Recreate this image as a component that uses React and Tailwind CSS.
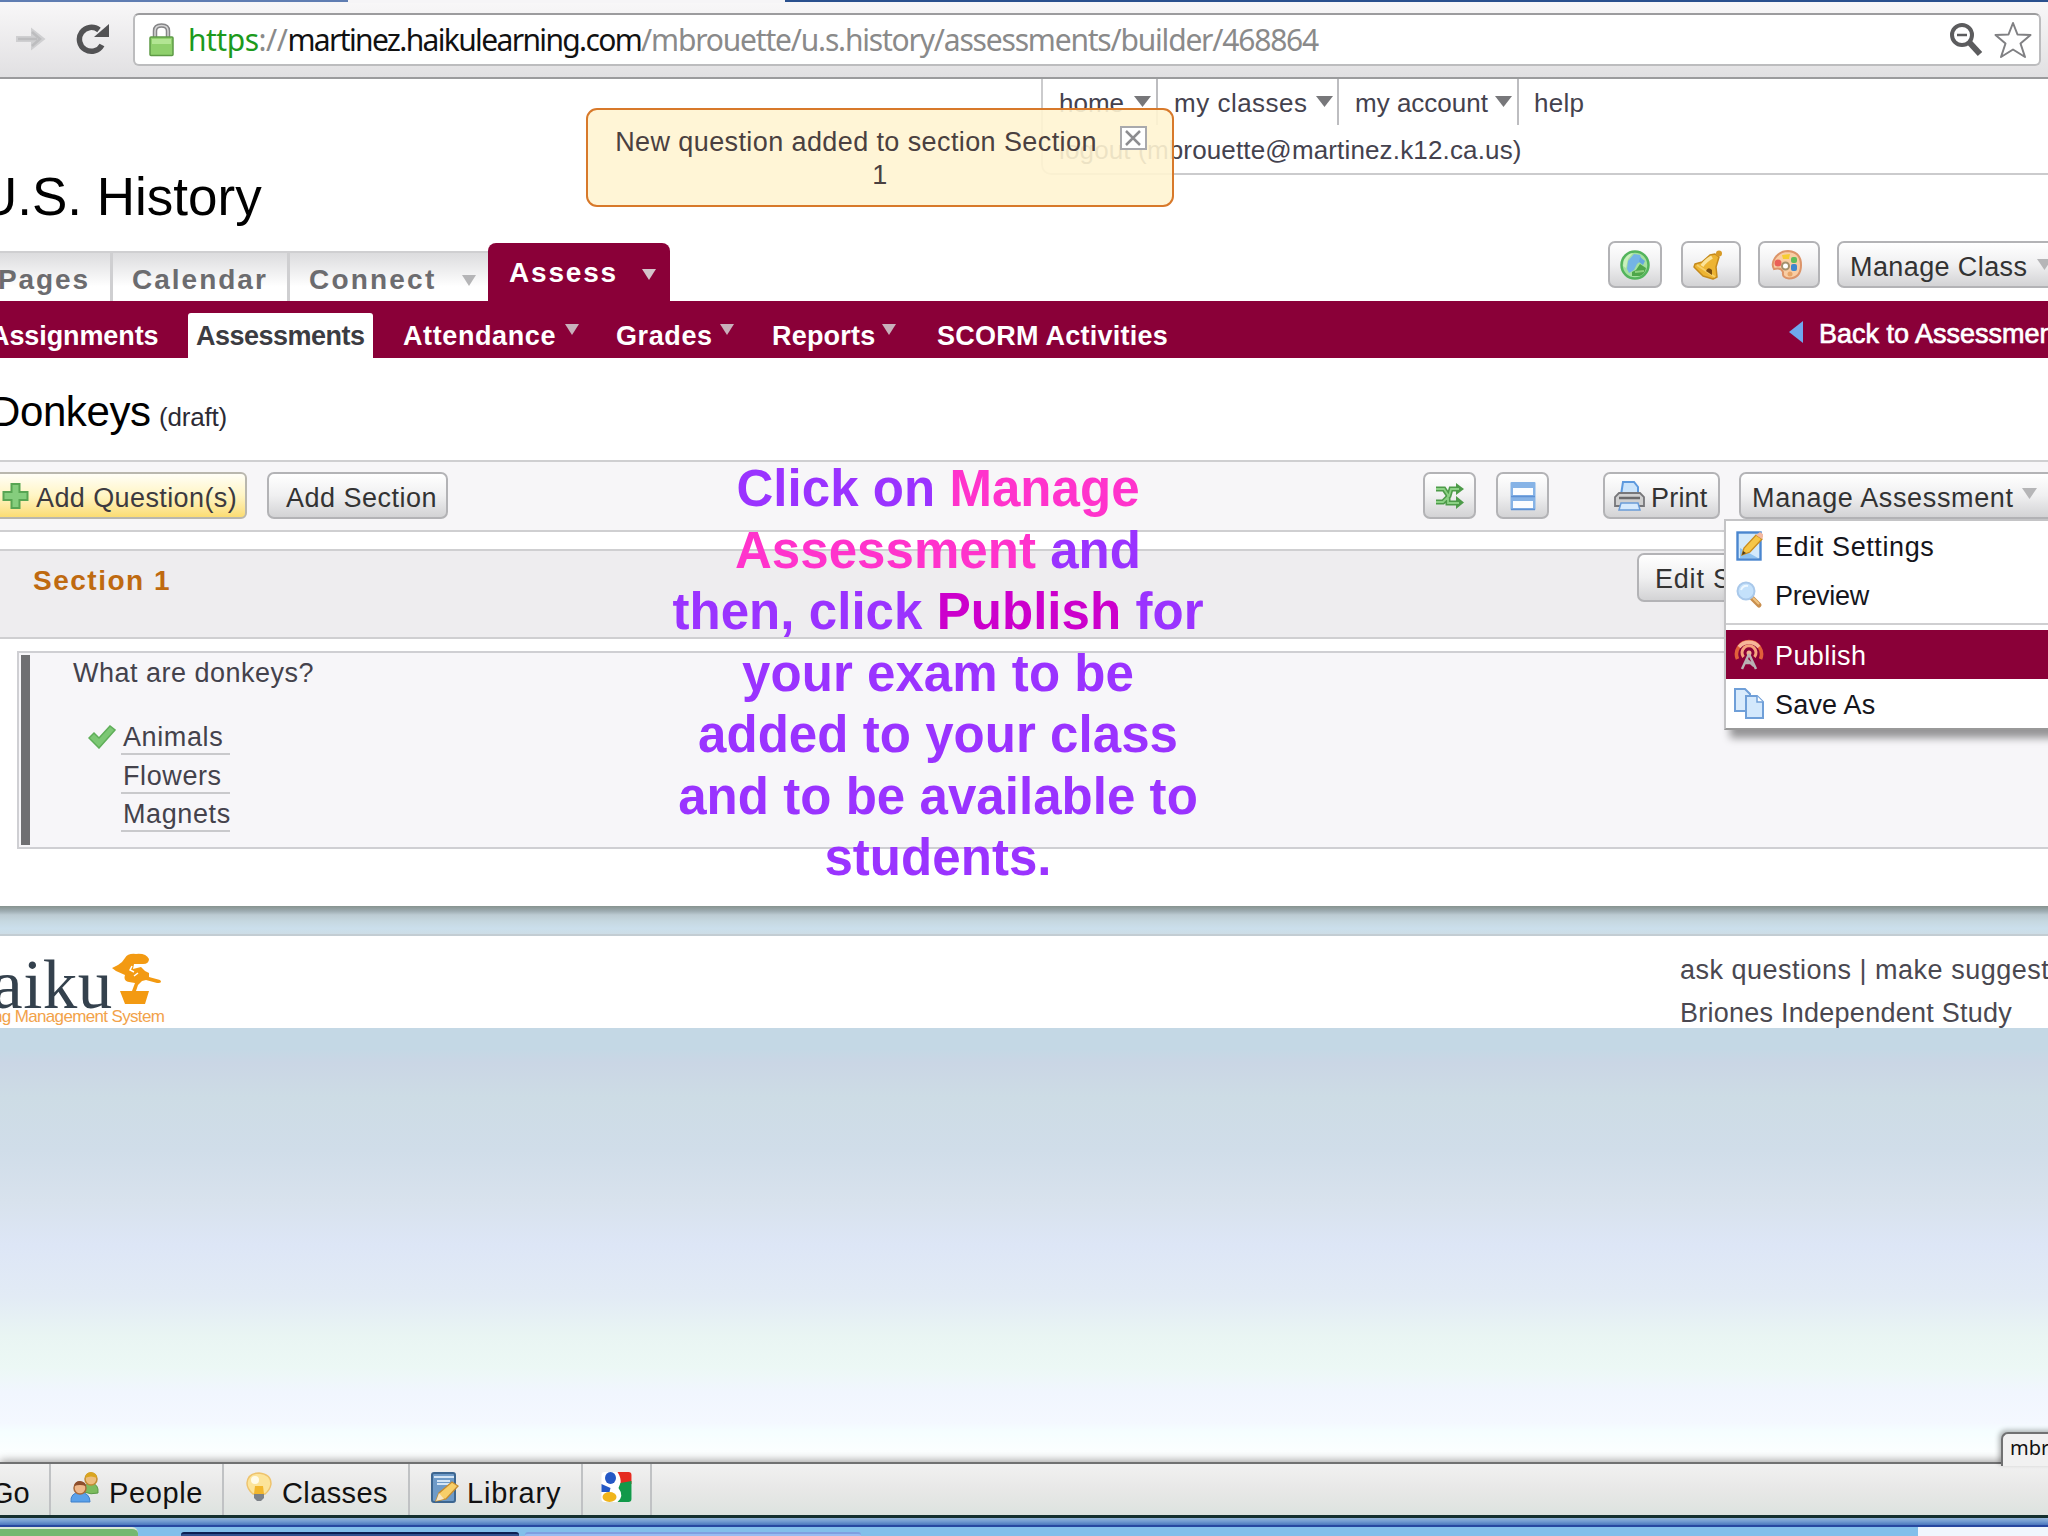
import { useState } from 'react';

const menuItems = [
  { label: 'Edit Settings', icon: 'edit', tracking: 'tracking-[0.6px]' },
  { label: 'Preview', icon: 'preview', tracking: 'tracking-[-0.3px]' },
  { divider: true },
  { label: 'Publish', icon: 'publish', tracking: 'tracking-[0.4px]' },
  { label: 'Save As', icon: 'copy', tracking: 'tracking-[0.2px]' },
];

const answers = [
  { text: 'Animals', correct: true },
  { text: 'Flowers', correct: false },
  { text: 'Magnets', correct: false },
];

function Caret({ className, color = '#8a8a8a' }) {
  return (
    <svg viewBox="0 0 16 10" preserveAspectRatio="none" className={`shrink-0 ${className}`}>
      <path d="M0 0H16L8 10Z" fill={color} />
    </svg>
  );
}

function MenuIcon({ name }) {
  if (name === 'edit') {
    return (
      <svg viewBox="0 0 27 30" className="w-[27px] h-[30px]">
        <rect x="1.5" y="1.5" width="23" height="27" fill="#d3e9fb" stroke="#4a86cf" strokeWidth="2.4" />
        <path d="M4 17L22 27H4Z" fill="#8fc2f0" />
        <path d="M6 24L8 17L20 4L26 8L14 21Z" fill="#f6c648" stroke="#c98b1c" strokeWidth="1.3" />
        <path d="M20 4L26 8L28 4L24 1Z" fill="#f3b9a2" />
        <path d="M6 24L7 20L10 22Z" fill="#4b3a1c" />
      </svg>
    );
  }
  if (name === 'preview') {
    return (
      <svg viewBox="0 0 27 28" className="w-[27px] h-[28px]">
        <path d="M16 17L23 24" stroke="#c98f4e" strokeWidth="5" strokeLinecap="round" />
        <path d="M17 17L23 23" stroke="#eec27f" strokeWidth="2" />
        <circle cx="10" cy="10" r="8.5" fill="#c4e1fb" stroke="#a9c8ea" strokeWidth="2" />
        <path d="M5 9Q7 4 12 5" stroke="#eef8ff" strokeWidth="2" fill="none" />
      </svg>
    );
  }
  if (name === 'publish') {
    return (
      <svg viewBox="0 0 30 31" className="ml-[-2px] w-[30px] h-[31px]" fill="none">
        <path d="M3.500 20A12.500 12.500 0 1 1 26.500 20" stroke="#e2603a" strokeWidth="3.600" />
        <path d="M5 8A12.500 11.500 0 0 1 25 8" stroke="#f6b79a" strokeWidth="3.600" />
        <path d="M9.500 18A7 7 0 1 1 20.500 18" stroke="#f5a37c" strokeWidth="3" />
        <circle cx="15" cy="14" r="2.500" fill="#f0b090" />
        <path d="M15 15L8 30M15 15L22 30M11 24L19 24M12 20L20 27" stroke="#b9b2b4" strokeWidth="2.500" />
      </svg>
    );
  }
  return (
    <svg viewBox="0 0 30 31" className="ml-[-2px] w-[30px] h-[31px]">
      <path d="M1 1H11L16 6V23H1Z" fill="#d9ebfc" stroke="#6f9fd8" strokeWidth="2" />
      <path d="M12 8H23L29 14V30H12Z" fill="#d3e8fc" stroke="#6f9fd8" strokeWidth="2" />
      <path d="M23 8V14H29" fill="#fff" stroke="#6f9fd8" strokeWidth="1.500" />
    </svg>
  );
}

function GreyButton({ className, children }) {
  return (
    <button className={`flex shrink-0 items-center rounded-[7px] border-2 border-[#b3b3b6] bg-gradient-to-b from-white via-[#f0f0f1] to-[#d3d3d5] whitespace-nowrap text-[27px] leading-none text-[#333] ${className}`}>
      {children}
    </button>
  );
}

function BrowserBar() {
  return (
    <div className="h-[79px]">
      <div className="flex h-[3px] justify-between bg-[#f6f5f7]">
        <div className="h-[2px] w-[348px] bg-[#5f7db2]" />
        <div className="h-[2px] w-[1263px] bg-[#2a508e]" />
      </div>
      <div className="flex h-[76px] border-b-2 border-[#9b9b9d] bg-gradient-to-b from-[#f8f7f8] to-[#e1e0e2] pt-[10px]">
        <svg viewBox="0 0 32 28" className="mt-[12px] ml-[15px] h-[28px] w-[32px]">
          <path d="M1 11H16V2.500L30.500 14L16 25.500V17H1Z" fill="#cfcfd1" />
          <path d="M3 14H22M17 7L25 14L17 21" stroke="#bdbdbf" strokeWidth="2.500" fill="none" />
        </svg>
        <svg viewBox="0 0 34 32" className="mt-[10px] ml-[29px] h-[32px] w-[34px]">
          <path d="M26 22A12 12 0 1 1 23 7" stroke="#525254" strokeWidth="5.500" fill="none" />
          <path d="M33 1V14H18Z" fill="#525254" />
        </svg>
        <div className="ml-[23px] flex h-[53px] w-[1908px] items-center rounded-[6px] border-2 border-t-[#9c9c9e] border-[#bcbcbe] bg-white pl-[14px]">
          <svg viewBox="0 0 25 34" className="h-[34px] w-[25px] shrink-0">
            <path d="M6 16V8Q6 2.500 12.500 2.500T19 8V16" stroke="#858587" strokeWidth="4.500" fill="none" />
            <path d="M6 16V8Q6 2.500 12.500 2.500T19 8V16" stroke="#d5d5d5" strokeWidth="1.500" fill="none" />
            <rect x="1" y="14" width="23" height="18.500" rx="1" fill="#8fd06c" stroke="#5d9a45" strokeWidth="1.500" />
            <rect x="3" y="16" width="19" height="5" fill="#b2e593" />
          </svg>
          <span className="ml-[14px] w-[1761px] shrink-0 font-['Noto_Sans'] text-[30px] leading-none tracking-[-1.2px] whitespace-nowrap text-[#8a8a8a]">
            <span className="tracking-[-0.5px]">
              <span className="text-[#1c9a1c]">https</span>://
            </span>
            <span className="tracking-[-1.65px] text-[#111]">martinez.haikulearning.com</span>/mbrouette/u.s.history/assessments/builder/468864
          </span>
          <svg viewBox="0 0 34 34" className="h-[34px] w-[34px] shrink-0" fill="none">
            <circle cx="13" cy="12" r="10" stroke="#5c5c5e" strokeWidth="4" />
            <path d="M8 12H18" stroke="#5c5c5e" strokeWidth="2.500" />
            <path d="M20 19L31 31" stroke="#5c5c5e" strokeWidth="6" />
          </svg>
          <svg viewBox="0 0 38 38" className="ml-[11px] h-[38px] w-[38px] shrink-0">
            <path d="M19 2L23.500 13.500L36.500 14L26.500 22.500L31 36L19 28.500L7 36L11.500 22.500L1.500 14L14.500 13.500Z" fill="#fff" stroke="#808083" strokeWidth="2" strokeLinejoin="round" />
          </svg>
        </div>
      </div>
    </div>
  );
}

function UserNav() {
  return (
    <div className="ml-[1041px] h-[96px] w-[1020px] rounded-bl-[10px] border-b-2 border-l-2 border-[#cbcbcd] text-[26px] leading-none whitespace-nowrap text-[#44424e]">
      <div className="flex h-[46px]">
        <div className="flex w-[115px] border-r-2 border-[#bdbdc0] pt-[11px] pl-[16px]">
          home<Caret className="mt-[6px] ml-[10px] h-[11px] w-[17px]" color="#77777a" />
        </div>
        <div className="flex w-[181px] border-r-2 border-[#bdbdc0] pt-[11px] pl-[16px]">
          <span className="w-[142px] tracking-[0.5px]">my classes</span>
          <Caret className="mt-[6px] h-[11px] w-[17px]" color="#77777a" />
        </div>
        <div className="flex w-[180px] border-r-2 border-[#bdbdc0] pt-[11px] pl-[16px]">
          <span className="w-[140px]">my account</span>
          <Caret className="mt-[6px] h-[11px] w-[17px]" color="#77777a" />
        </div>
        <span className="pt-[11px] pl-[15px] tracking-[0.3px]">help</span>
      </div>
      <p className="pt-[12px] pl-[16px] tracking-[0.15px]">logout (mbrouette@martinez.k12.ca.us)</p>
    </div>
  );
}

function Toast({ onClose }) {
  return (
    <div className="absolute top-[108px] left-[586px] h-[99px] w-[588px] rounded-[11px] border-2 border-[#d8792a] bg-[#fff4d2]/90 px-[25px] pt-[16px]">
      <button onClick={onClose} className="float-right ml-[21px] h-[24px] w-[27px] border-2 border-[#a9a9ac] bg-white">
        <svg viewBox="0 0 22 20" className="h-[20px] w-[22px]">
          <path d="M4 3L18 17M18 3L4 17" stroke="#8d8d90" strokeWidth="2.500" />
        </svg>
      </button>
      <p className="text-center text-[27px] leading-[33px] tracking-[0.4px] text-[#4a4040]">
        New question added to section Section 1
      </p>
    </div>
  );
}

function ClassTabs() {
  return (
    <div className="flex h-[60px] items-end text-[28px] leading-none font-bold whitespace-nowrap text-[#6c6c6f]">
      <div className="flex h-[50px] w-[113px] shrink-0 border-t-2 border-r-3 border-[#cfcfd1] bg-gradient-to-b from-[#dcdcde] to-white to-70%">
        <span className="mt-[13px] ml-[-2px] tracking-[1.9px]">Pages</span>
      </div>
      <div className="flex h-[50px] w-[177px] shrink-0 border-t-2 border-r-3 border-[#cfcfd1] bg-gradient-to-b from-[#dcdcde] to-white to-70%">
        <span className="mt-[13px] ml-[19px] tracking-[2px]">Calendar</span>
      </div>
      <div className="flex h-[50px] w-[198px] shrink-0 border-t-2 border-[#cfcfd1] bg-gradient-to-b from-[#dcdcde] to-white to-70%">
        <span className="mt-[13px] ml-[19px] w-[153px] tracking-[2.200px]">Connect</span>
        <Caret className="mt-[22px] h-[11px] w-[14px]" color="#b5b5b7" />
      </div>
      <div className="flex h-[58px] w-[182px] shrink-0 rounded-t-[8px] bg-[#8a0038] text-white">
        <span className="mt-[16px] ml-[21px] w-[133px] tracking-[1.8px]">Assess</span>
        <Caret className="mt-[26px] h-[11px] w-[14px]" color="#d4c3ca" />
      </div>
      <div className="mb-[13px] ml-[938px] flex shrink-0">
        <GreyButton className="h-[47px] w-[54px] justify-center">
          <svg viewBox="0 0 32 30" className="h-[30px] w-[32px]">
            <circle cx="16" cy="15" r="13.500" fill="#a5e0a0" stroke="#53b45c" strokeWidth="2.500" />
            <path d="M8 19L9 11L15 4L21 5L23 10L18 14L15 20L10 23Z" fill="#74b4e6" />
            <path d="M21 7L26 11L24 15L20 12Z" fill="#64a7dd" />
            <path d="M5 10Q8 4 14 3L9 9L7 18L4 16Z" fill="#c9f0bd" />
            <path d="M17 20L21 14L27 18Q26 24 21 26L13 26L13 22Z" fill="#4ea64a" />
            <path d="M16 22L25 21" stroke="#8fd07f" strokeWidth="1.800" />
          </svg>
        </GreyButton>
        <GreyButton className="ml-[19px] h-[47px] w-[60px] justify-center">
          <svg viewBox="0 0 30 30" className="mr-[6px] h-[30px] w-[30px]">
            <path d="M22 4L26 7L23 17L24 27L20 29L10 26L1 17L2 14L9 12L17 5Z" fill="#edb433" stroke="#c58a1c" strokeWidth="1.500" strokeLinejoin="round" />
            <path d="M19 7Q12 11 9 16" stroke="#fbe39a" strokeWidth="3.500" fill="none" />
            <path d="M4 15L22 27" stroke="#f6d06a" strokeWidth="2" />
            <path d="M13 21Q15 16 19 20L19 25Z" fill="#7c4f0e" />
            <circle cx="26" cy="3.500" r="3" fill="#d79a26" />
          </svg>
        </GreyButton>
        <GreyButton className="ml-[17px] h-[47px] w-[62px] justify-center">
          <svg viewBox="0 0 32 30" className="mr-[4px] h-[30px] w-[32px]">
            <path d="M17 1Q30 2 30 15T18 28.500Q11 28 12 22Q10 17 3 19Q0 14 4 8Q9 1 17 1Z" fill="#f9cda3" stroke="#dc9469" strokeWidth="2" />
            <circle cx="7" cy="13" r="3.500" fill="#ea6058" />
            <path d="M11 5L19 4L18 9L12 9Z" fill="#f6cc31" />
            <rect x="20" y="7" width="6" height="6" rx="2" fill="#5fbd59" />
            <rect x="20" y="14" width="6" height="7" rx="2" fill="#3f87cc" />
            <circle cx="14.500" cy="16" r="3.500" fill="#fff" stroke="#a5906b" strokeWidth="2" />
            <circle cx="19" cy="24" r="2.500" fill="#e7a568" />
          </svg>
        </GreyButton>
        <GreyButton className="ml-[17px] h-[47px] w-[240px] pt-[6px] pl-[11px] font-normal">
          <span className="w-[187px] text-left tracking-[0.4px]">Manage Class</span>
          <Caret className="mb-[6px] h-[11px] w-[15px]" color="#b5b5b7" />
        </GreyButton>
      </div>
    </div>
  );
}

function SubNav() {
  return (
    <nav className="flex h-[57px] items-end bg-[#8a0038] text-[27px] leading-none font-bold whitespace-nowrap text-white">
      <span className="mb-[8px] ml-[-10px] w-[198px] shrink-0 tracking-[-0.1px]">Assignments</span>
      <span className="h-[45px] w-[185px] shrink-0 rounded-t-[3px] bg-white pt-[10px] pl-[8px] tracking-[-0.5px] text-[#3c3c42]">Assessments</span>
      <span className="mb-[8px] ml-[30px] flex w-[213px] shrink-0 tracking-[0.6px]">
        <span className="w-[162px]">Attendance</span>
        <Caret className="mt-[1px] h-[11px] w-[14px]" color="#c9b0bb" />
      </span>
      <span className="mb-[8px] flex w-[156px] shrink-0 tracking-[0.6px]">
        <span className="w-[104px]">Grades</span>
        <Caret className="mt-[1px] h-[11px] w-[14px]" color="#c9b0bb" />
      </span>
      <span className="mb-[8px] flex w-[165px] shrink-0">
        <span className="w-[110px] tracking-[0.2px]">Reports</span>
        <Caret className="mt-[1px] h-[11px] w-[14px]" color="#c9b0bb" />
      </span>
      <span className="mb-[8px] w-[852px] shrink-0 tracking-[0.25px]">SCORM Activities</span>
      <svg viewBox="0 0 14 22" className="mb-[15px] h-[22px] w-[14px] shrink-0">
        <path d="M14 0V22L0 11Z" fill="#6fa8ee" />
      </svg>
      <span className="mb-[10px] ml-[16px] shrink-0 font-normal [-webkit-text-stroke:0.7px_white]">Back to Assessments</span>
    </nav>
  );
}

function ManageMenu({ active, onSelect }) {
  return (
    <div className="absolute top-[47px] left-[-15px] z-10 h-[211px] w-[360px] border-2 border-[#c4c4c6] border-b-[#999] bg-white text-[27px] leading-none text-[#15151c] shadow-[6px_8px_8px_rgba(0,0,0,0.4)]">
      {menuItems.map((item, i) =>
        item.divider ? (
          <div key={i} className="mt-[4px] mb-[5px] h-[2px] bg-[#cfcfd1]" />
        ) : (
          <div
            key={item.label}
            onMouseEnter={() => onSelect(item.label)}
            className={`flex h-[49px] items-center pl-[10px] ${item.label === active ? 'bg-[#8a0038] text-white' : ''}`}
          >
            <span className="flex w-[39px] items-center">
              <MenuIcon name={item.icon} />
            </span>
            <span className={`mt-[4px] ${item.tracking}`}>{item.label}</span>
          </div>
        )
      )}
    </div>
  );
}

function AssessmentToolbar() {
  const [active, setActive] = useState('Publish');

  return (
    <div className="flex h-[72px] border-y-2 border-[#cfcfd1] bg-[#f7f6f8] pt-[10px]">
      <button className="ml-[-10px] flex h-[47px] w-[257px] shrink-0 items-center rounded-[6px] border-2 border-[#b9b7ae] bg-gradient-to-b from-[#fffef6] via-[#fff5c4] to-[#fbdc72] pl-[10px] text-[27px] leading-none whitespace-nowrap text-[#3c3a40]">
        <svg viewBox="0 0 26 26" className="h-[26px] w-[27px] shrink-0">
          <path d="M9 1H17V9H25V17H17V25H9V17H1V9H9Z" fill="#85cd7d" stroke="#58a553" strokeWidth="2" />
        </svg>
        <span className="mt-[5px] ml-[7px] tracking-[0.4px]">Add Question(s)</span>
      </button>
      <GreyButton className="ml-[20px] h-[47px] w-[181px] pt-[5px] pl-[17px] tracking-[0.5px]">Add Section</GreyButton>
      <GreyButton className="ml-[975px] h-[47px] w-[53px] justify-center">
        <svg viewBox="0 0 30 26" className="h-[26px] w-[30px]" fill="none">
          <path d="M1 6H9L13 12V20H22M1 19H8L14 13L16 6H22" stroke="#4d9b49" strokeWidth="5" />
          <path d="M21 0L29 6L21 12ZM21 13L29 19.500L21 26Z" fill="#4d9b49" />
          <path d="M1 6H9L13 12V20H24M1 19H8L14 13L16 6H24" stroke="#8bd184" strokeWidth="1.800" />
        </svg>
      </GreyButton>
      <GreyButton className="ml-[20px] h-[47px] w-[53px] justify-center">
        <svg viewBox="0 0 26 30" className="h-[30px] w-[26px]">
          <rect x="0.500" y="1" width="25" height="28" rx="1" fill="#86b3e6" />
          <rect x="3" y="7" width="20" height="7" fill="#fbfdff" />
          <rect x="3" y="20" width="20" height="7" fill="#fbfdff" />
          <path d="M1 15.500H25" stroke="#5f92d4" strokeWidth="1.500" />
          <path d="M1 28.500H25" stroke="#5f92d4" strokeWidth="1.500" />
        </svg>
      </GreyButton>
      <GreyButton className="ml-[54px] h-[47px] w-[117px] pl-[9px]">
        <svg viewBox="0 0 31 30" className="h-[30px] w-[31px] shrink-0">
          <path d="M7 14L9 1H20L24 6V14Z" fill="#cbe4fb" stroke="#5e9ade" strokeWidth="2" />
          <path d="M5 12H26L30 16V25H1V16Z" fill="#d0d0d0" stroke="#77777a" strokeWidth="1.800" />
          <path d="M5 17H26" stroke="#6a6a6c" strokeWidth="2.500" />
          <path d="M7 22H24L26 29H5Z" fill="#d6eafd" stroke="#6a9cd8" strokeWidth="1.500" />
        </svg>
        <span className="mt-[5px] ml-[6px] tracking-[0.2px]">Print</span>
      </GreyButton>
      <div className="relative ml-[19px]">
        <GreyButton className="h-[47px] w-[330px] pt-[5px] pl-[11px]">
          <span className="w-[270px] text-left tracking-[0.65px]">Manage Assessment</span>
          <Caret className="mb-[10px] h-[11px] w-[15px]" color="#b5b5b7" />
        </GreyButton>
        <ManageMenu active={active} onSelect={setActive} />
      </div>
    </div>
  );
}

function QuestionCard() {
  return (
    <div className="mt-[12px] ml-[17px] flex h-[198px] border-2 border-r-0 border-[#cfcfd3] bg-[#f7f6f9] pt-[2px] pl-[2px] text-[27px] leading-none text-[#44424c]">
      <div className="h-[190px] w-[9px] bg-[#6f6f72]" />
      <div className="ml-[43px]">
        <p className="mt-[5px] tracking-[0.5px]">What are donkeys?</p>
        <ul className="mt-[35px]">
          {answers.map((answer) => (
            <li key={answer.text} className="flex h-[38.500px]">
              <span className="w-[48px] pl-[15px]">
                {answer.correct && (
                  <svg viewBox="0 0 28 24" className="mt-[3px] h-[24px] w-[28px]">
                    <path d="M1 13L6 8L11 13L22 1L27 5L11 23Z" fill="#7cc774" stroke="#5fae59" strokeWidth="1.500" />
                  </svg>
                )}
              </span>
              <span className="h-[33px] w-[109px] border-b-2 border-[#c9c9cc] pt-[2px] pl-[2px] tracking-[0.6px]">{answer.text}</span>
            </li>
          ))}
        </ul>
      </div>
    </div>
  );
}

function Footer() {
  return (
    <footer className="flex h-[94px] border-t-2 border-[#c3cdd3] bg-white whitespace-nowrap">
      <div className="relative h-[92px] w-[1680px] shrink-0 overflow-hidden">
        <span className="absolute top-[21px] left-[-8px] font-['Liberation_Serif'] text-[69px] leading-[56px] tracking-[0.5px] text-[#34414d]">aiku</span>
        <svg viewBox="0 0 50 52" className="absolute top-[17px] left-[112px] h-[52px] w-[50px]" fill="#f39a12">
          <path d="M13 5Q16 0 24 1Q34 0 37 6Q37 11 31 11L22 11L21 16L29 14L33 18L37 20L37 24L48 27Q51 30 45 30L34 27L30 28L26 32L24 38H37L33 51H13L8 38H20L23 30L17 29Q11 28 13 22L4 18L0 15L6 12L10 9Z" />
          <path d="M20 13L18 17L22 19M26 20L22 23" stroke="#fff" strokeWidth="1.500" fill="none" />
        </svg>
        <span className="absolute top-[71px] left-[-7px] text-[17px] leading-[20px] tracking-[-0.65px] text-[#f2a24a]">ng Management System</span>
      </div>
      <div className="shrink-0 pt-[21px] text-[27px] leading-none text-[#4a4850]">
        <p className="tracking-[0.5px]">ask questions | make suggestions</p>
        <p className="mt-[16px] tracking-[0.25px]">Briones Independent Study</p>
      </div>
    </footer>
  );
}

function DockBar() {
  return (
    <div className="relative flex h-[56px] border-t-2 border-b-3 border-t-[#707172] border-b-[#14302e] bg-gradient-to-b from-[#f1f1f1] via-[#e8e8e7] to-[#dde3df] text-[29px] leading-none text-[#111] shadow-[0_-2px_8px_rgba(0,0,0,0.35)]">
      <div className="w-[51px] border-r-2 border-[#c0c2c4] pt-[15px]">
        <span className="ml-[-9px]">Go</span>
      </div>
      <div className="flex w-[173px] border-r-2 border-[#c0c2c4] pt-[8px] pl-[19px]">
        <svg viewBox="0 0 30 31" className="h-[31px] w-[30px]">
          <path d="M14 20Q13 12 21 11Q29 12 28 21Q21 23 14 20Z" fill="#7cbb5d" stroke="#5a9a45" />
          <circle cx="21" cy="7" r="6" fill="#edbd7c" stroke="#c28b33" strokeWidth="1.500" />
          <path d="M15 6Q16 0 21 0Q27 1 27 6Q21 3 15 6Z" fill="#d9a520" />
          <path d="M1 30Q0 21 10 20Q20 21 20 30Z" fill="#5aa1ea" stroke="#3d7fca" />
          <circle cx="10" cy="16" r="6" fill="#efb88a" stroke="#a96a3b" strokeWidth="1.500" />
          <path d="M4 14Q5 9 10 9Q16 10 16 14Q10 12 4 14Z" fill="#8e4f2d" />
        </svg>
        <span className="mt-[7px] ml-[9px] tracking-[0.6px]">People</span>
      </div>
      <div className="flex w-[186px] border-r-2 border-[#c0c2c4] pt-[8px] pl-[21px]">
        <svg viewBox="0 0 28 30" className="h-[30px] w-[28px]">
          <path d="M14 1Q26 2 26 12Q25 18 20 22H8Q2 17 2 11Q3 1 14 1Z" fill="#fce49a" stroke="#eec36d" strokeWidth="1.500" />
          <circle cx="10" cy="8" r="4" fill="#fffbe8" />
          <path d="M10 14H18L19 22H9Z" fill="#f2b62c" />
          <path d="M9 22H19V26L16 29H12L9 26Z" fill="#7d8288" />
        </svg>
        <span className="mt-[7px] ml-[9px] tracking-[0.4px]">Classes</span>
      </div>
      <div className="flex w-[173px] border-r-2 border-[#c0c2c4] pt-[8px] pl-[21px]">
        <svg viewBox="0 0 28 31" className="h-[31px] w-[28px]">
          <rect x="1" y="1" width="23" height="29" rx="2" fill="#6f9bc8" stroke="#3d6690" strokeWidth="2" />
          <path d="M3 5H23M6 9H19M6 12H19" stroke="#d4e5f5" strokeWidth="1.800" />
          <path d="M5 29L8 21L21 10L27 14L15 27Z" fill="#f8cf69" stroke="#c58b2e" strokeWidth="1.300" />
          <path d="M5 29L8 21L13 27Z" fill="#f7e6c4" />
        </svg>
        <span className="mt-[7px] ml-[8px] tracking-[0.8px]">Library</span>
      </div>
      <div className="w-[69px] border-r-2 border-[#c0c2c4] pt-[8px] pl-[18px]">
        <svg viewBox="0 0 30 30" className="h-[30px] w-[31px]">
          <rect width="30" height="30" rx="3" fill="#fff" />
          <path d="M16 0H27Q30 0 30 3V12H19Q20 6 16 0Z" fill="#e52b20" />
          <path d="M19 11L30 9V27Q30 30 27 30H16Q23 24 17 16Z" fill="#12994a" />
          <ellipse cx="9" cy="6" rx="5.500" ry="6" fill="#2458c5" />
          <path d="M0 12L9 16L8 20H0Z" fill="#2458c5" />
          <ellipse cx="8" cy="25" rx="7" ry="5" fill="#f0b51c" />
        </svg>
      </div>
      <div className="absolute top-[-32px] left-[2001px] h-[34px] w-[60px] rounded-tl-[7px] border-t-2 border-l-2 border-[#707172] bg-[#f1f1f1] pt-[4px] pl-[7px] font-['Noto_Sans'] text-[20px] leading-[20px] shadow-[-2px_-2px_5px_rgba(0,0,0,0.3)]">
        mbrouette
      </div>
    </div>
  );
}

function App() {
  const [showToast, setShowToast] = useState(true);

  return (
    <div className="relative h-[1536px] w-[2048px] overflow-hidden bg-white font-['Liberation_Sans',Arial,sans-serif]">
      <BrowserBar />

      <header className="h-[162px]">
        <UserNav />
        <h1 className="mt-[-8px] ml-[-21px] text-[53px] leading-[60px] whitespace-nowrap text-black">U.S. History</h1>
      </header>

      <ClassTabs />
      <SubNav />

      {/* Assessment builder */}
      <main className="h-[548px] bg-white">
        <div className="flex h-[102px] items-baseline pt-[30px] text-[42px] leading-[48px] whitespace-nowrap text-black">
          <h2 className="ml-[-10px] w-[169px] tracking-[-0.4px]">Donkeys</h2>
          <span className="text-[26px] tracking-[-0.2px] text-[#2c2a34]">(draft)</span>
        </div>
        <AssessmentToolbar />
        <div className="mt-[17px] flex h-[90px] justify-between border-y-2 border-[#cfcfd1] bg-[#eeedef]">
          <h3 className="mt-[16px] ml-[33px] text-[28px] leading-none font-bold tracking-[1.5px] text-[#bf6a10]">Section 1</h3>
          <GreyButton className="mt-[2px] h-[49px] w-[411px] pt-[4px] pl-[16px] tracking-[0.8px]">Edit Section</GreyButton>
        </div>
        <QuestionCard />
      </main>

      <div className="h-[28px] bg-[linear-gradient(to_bottom,#87938f_0%,#9dabb1_18%,#bccbd3_32%,#c6d8e1_55%,#cbdfec_80%,#cddde6_100%)]" />
      <Footer />
      <div className="h-[434px] bg-[linear-gradient(to_bottom,#c4d8e5_0%,#c4d8e5_5%,#cad6e5_8%,#cddce5_16%,#d0dde9_28%,#d8e2ed_40%,#dde6f6_50%,#e2ebf5_62%,#e9f5f3_71%,#ecf8f5_78%,#f1f6fe_84%,#f4f8ff_91%,#f5feff_93%,#ffffff_100%)]" />
      <DockBar />

      {/* Desktop taskbar */}
      <div className="h-[7px] bg-gradient-to-b from-[#a3c8f0] to-[#4a76bd]" />
      <div className="flex h-[11px] items-end border-t-2 border-[#2747a0] bg-[#82bfea]">
        <div className="h-[9px] w-[138px] rounded-tr-[6px] border-t-2 border-[#d8e8d8] bg-[#74b870]" />
        <div className="ml-[43px] h-[4px] w-[338px] rounded-t-[3px] border-t-2 border-[#0c1f52] bg-[#31528f]" />
        <div className="ml-[6px] h-[4px] w-[336px] rounded-t-[3px] border-t-2 border-[#7f9fe0] bg-[#98bdf3]" />
        <div className="ml-[1057px] h-[9px] w-[130px] bg-[#f0f6fd]" />
      </div>

      {showToast && <Toast onClose={() => setShowToast(false)} />}

      {/* Instruction note over the page */}
      <p className="absolute top-[458px] left-[638px] z-20 w-[600px] text-center text-[51px] leading-[61.500px] font-bold tracking-[0.05px] text-[#9a33ff]">
        Click on <span className="text-[#ff33cc]">Manage</span>
        <br />
        <span className="text-[#ff33cc]">Assessment</span> and
        <br />
        then, click <span className="text-[#cc00cc]">Publish</span> for
        <br />
        your exam to be
        <br />
        added to your class
        <br />
        and to be available to
        <br />
        students.
      </p>
    </div>
  );
}

export default App;
